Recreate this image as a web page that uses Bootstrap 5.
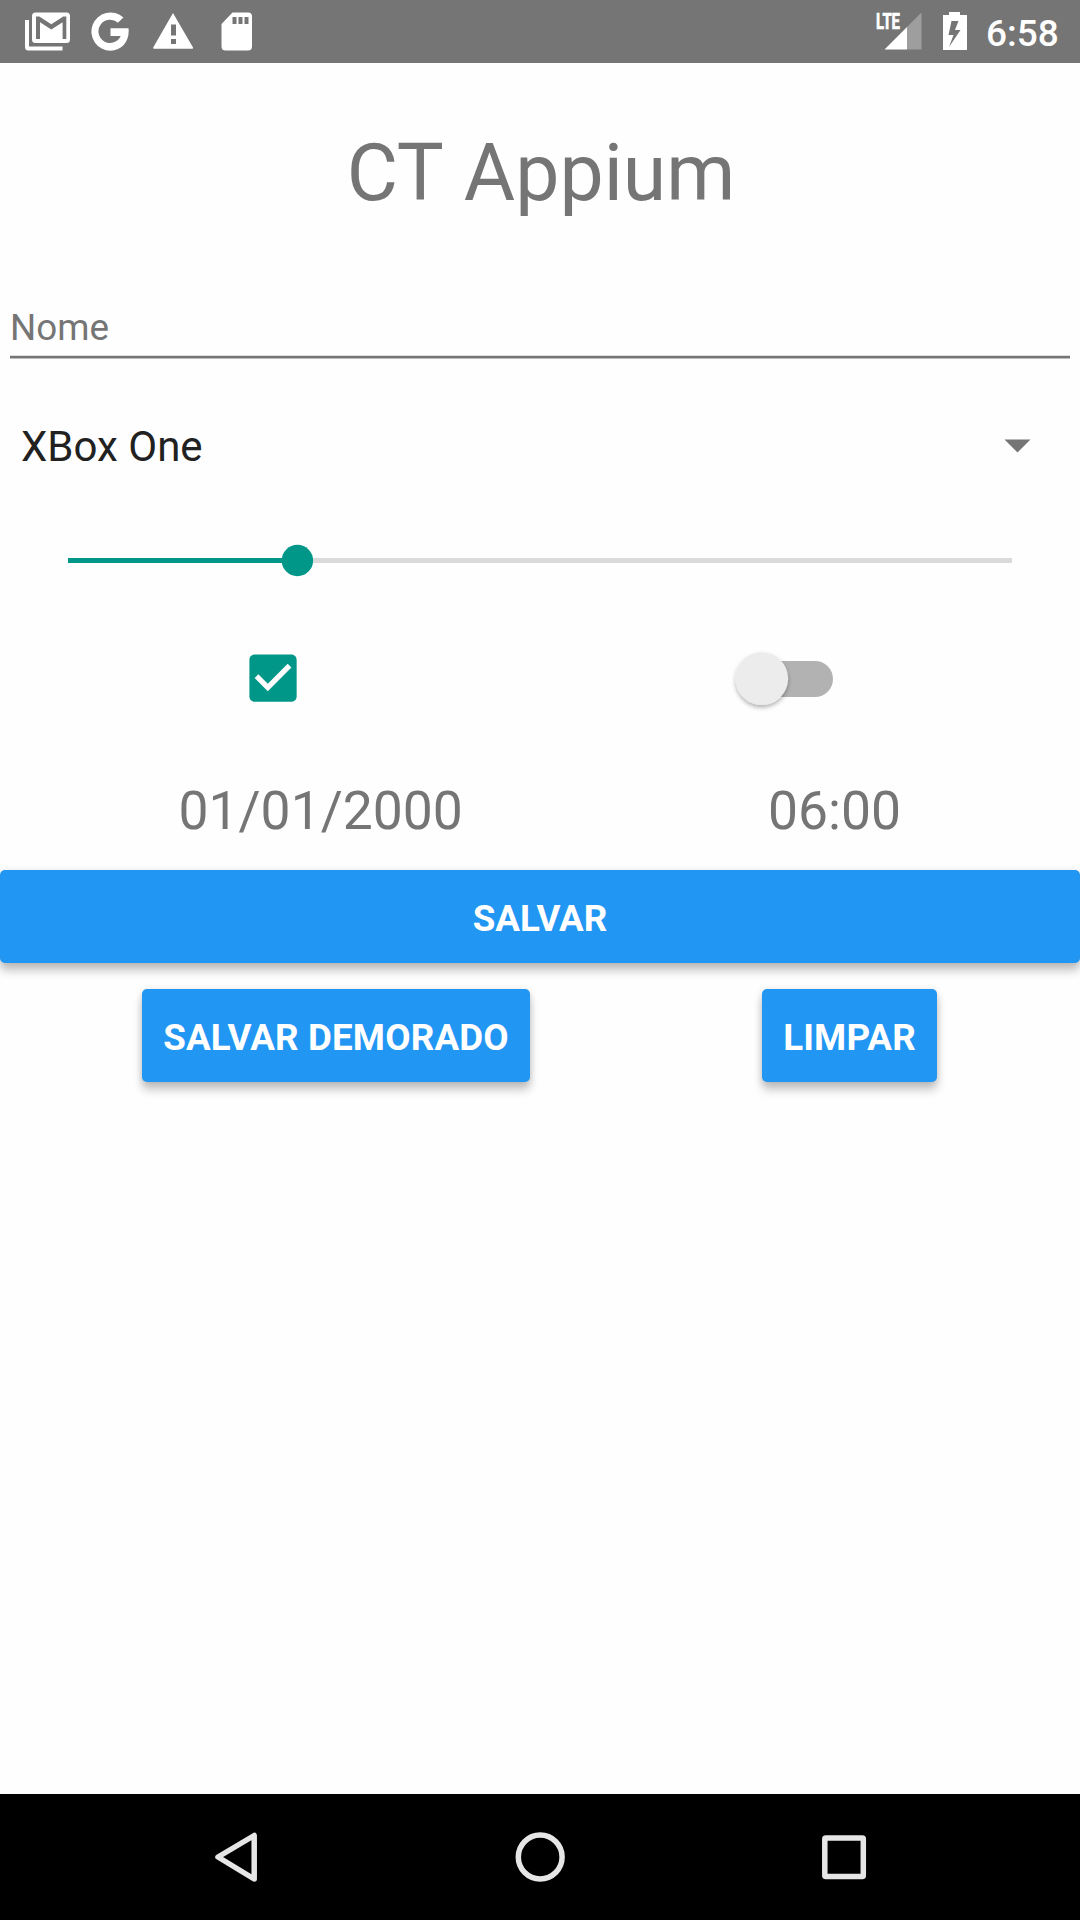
<!DOCTYPE html>
<html lang="pt-BR">
<head>
<meta charset="utf-8">
<meta name="viewport" content="width=device-width, initial-scale=1">
<title>CT Appium</title>
<link rel="stylesheet" href="https://cdn.jsdelivr.net/npm/bootstrap@5.3.0/dist/css/bootstrap.min.css">
<style>
  body { font-family: Roboto, sans-serif; background: #fefefe; color: #757575; }
  .screen { height: 1920px; width: 1080px; }
  .status-bar { height: 63px; background: #757575; color: #fff; }
  .status-bar svg { display: block; flex: none; }
  .clock { font-size: 37px; font-weight: 500; line-height: 63px; padding-top: 2px; width: 94px; }
  .title-text { font-size: 78.75px; font-weight: 400; line-height: 94px; padding: 63px 0 0 2px; word-spacing: 2px; }
  .name-wrap { padding: 77px 10px 0; }
  .name-field { font-size: 36.75px; line-height: 56px; height: 58px; color: #757575; background: none; border: 0; border-radius: 0; padding: 2px 0 0; }
  .name-field::placeholder { color: #757575; opacity: 1; }
  .name-line { height: 4px; background: linear-gradient(#dedede 1px, #757575 1px 3px, #bdbdbd 3px); }
  .console-row { height: 126px; margin-top: 24px; padding: 0 49px 0 21px; font-size: 42px; color: #212121; }
  .seek { height: 32px; margin: 36px 68px 0; }
  .seek svg, .toggles svg { display: block; overflow: visible; }
  .toggles { height: 64px; margin-top: 69px; padding: 0 241px; }
  .values { height: 64px; margin-top: 69px; padding-left: 178.5px; font-size: 53.45px; line-height: 64px; }
  .time-value { width: 312px; }
  .btn-app { --bs-btn-bg: #2196f3; --bs-btn-color: #fff; --bs-btn-hover-bg: #1e88e5; --bs-btn-hover-color: #fff;
    --bs-btn-border-width: 0; --bs-btn-border-radius: 5px; --bs-btn-font-size: 36.75px; --bs-btn-font-weight: 700;
    --bs-btn-line-height: 43px; --bs-btn-padding-y: 0; --bs-btn-padding-x: 0;
    height: 93px; padding-top: 4px; box-shadow: 0 8px 10px rgba(0,0,0,.22), 0 1px 7px rgba(0,0,0,.12); }
  .save-wrap { margin-top: 27px; }
  .actions { margin-top: 26px; padding: 0 143px 0 142px; }
  .actions .btn-app { letter-spacing: .15px; }
  .btn-slow { width: 388px; }
  .btn-clear { width: 175px; }
  .nav-keys { height: 126px; background: #000; }
</style>
</head>
<body>
<div class="screen d-flex flex-column overflow-hidden">
  <header class="status-bar d-flex justify-content-between">
    <svg width="270" height="63" viewBox="0 0 270 63" fill="#fff" aria-hidden="true">
      <path d="M25 20h4v26.500h33.500v4H28.500a3.500 3.500 0 0 1-3.500-3.500z"/>
      <path fill-rule="evenodd" d="M35.500 12.500h31a3.500 3.500 0 0 1 3.500 3.500v23.500a3.500 3.500 0 0 1-3.500 3.500h-31a3.500 3.500 0 0 1-3.500-3.500V16a3.500 3.500 0 0 1 3.500-3.500zM36 16.500V39h4V22.200l11.300 7.300 11.300-7.300V39h3.700V16.500h-3L51.300 24.300 39.300 16.500z"/>
      <path d="M110.500 28.300h18c1.500 12-6 22.400-17.900 22.400a19.100 19.100 0 1 1 12.800-33.200l-5.500 5.300a11.600 11.600 0 1 0 2.800 13.200h-10.200z"/>
      <path fill-rule="evenodd" d="M173 13l20 34.500q.5 1.300-1 1.300h-37.800q-1.500 0-1-1.300zM171 24.500v11h5v-11zm0 14.500v5h5v-5z"/>
      <path fill-rule="evenodd" d="M232.500 12.500H248a4 4 0 0 1 4 4v30a4 4 0 0 1-4 4h-22.500a4 4 0 0 1-4-4V24zm0 4.500v7h4v-7zm6 0v7h4v-7zm6 0v7h4v-7z"/>
    </svg>
    <div class="d-flex">
      <svg width="116" height="63" viewBox="870 0 116 63" fill="#fff" aria-hidden="true">
        <path fill-opacity=".3" d="M921.500 12.500v37H907V27z"/>
        <path d="M907 27v22.500h-22.500z"/>
        <text x="876" y="29" font-size="21.500" font-weight="700" stroke="#fff" stroke-width=".7" textLength="24" lengthAdjust="spacingAndGlyphs">LTE</text>
        <path fill-rule="evenodd" d="M949 12h11v3h7v35h-24V15h6zM951.500 21l-3 14h5l-4.500 12 11.500-17h-5.500l3.500-9z"/>
      </svg>
      <div class="clock">6:58</div>
    </div>
  </header>

  <main class="flex-grow-1">
    <h1 class="title-text text-center m-0">CT Appium</h1>

    <div class="name-wrap">
      <input class="name-field form-control" type="text" placeholder="Nome" aria-label="Nome">
      <div class="name-line"></div>
    </div>

    <div class="console-row d-flex align-items-center justify-content-between" role="combobox">
      <span>XBox One</span>
      <svg width="27" height="14" viewBox="0 0 27 14" fill="#757575"><path d="M.5.500h26L13.500 13.500z"/></svg>
    </div>

    <div class="seek">
      <svg width="944" height="32" viewBox="0 0 944 32">
        <path fill="#dadada" d="M229 13h715v5H229z"/>
        <path fill="#009688" d="M0 13h229v5H0z"/>
        <circle cx="229.400" cy="15.500" r="15.700" fill="#009688"/>
      </svg>
    </div>

    <div class="toggles d-flex justify-content-between">
      <svg width="63" height="63" viewBox="-.2 -.2 24 24" fill="#009688"><path d="M19 3H5c-1.110 0-2 .9-2 2v14c0 1.100.89 2 2 2h14c1.110 0 2-.9 2-2V5c0-1.100-.89-2-2-2zm-9 14l-5-5 1.410-1.410L10 14.170l7.590-7.590L19 8l-9 9z"/></svg>
      <svg width="106" height="64" viewBox="733 646 106 64">
        <defs><filter id="thumb" x="-30%" y="-30%" width="160%" height="160%"><feDropShadow dx="0" dy="2.500" stdDeviation="2" flood-opacity=".3"/></filter></defs>
        <rect x="743" y="661" width="90" height="36" rx="18" fill="#b2b2b2"/>
        <circle cx="761.800" cy="678.600" r="26.300" fill="#ececec" filter="url(#thumb)"/>
      </svg>
    </div>

    <div class="values d-flex">
      <div class="flex-grow-1">01/01/2000</div>
      <div class="time-value">06:00</div>
    </div>

    <div class="save-wrap"><button class="btn btn-app w-100" type="button">SALVAR</button></div>
    <div class="actions d-flex justify-content-between">
      <button class="btn btn-app btn-slow" type="button">SALVAR DEMORADO</button>
      <button class="btn btn-app btn-clear" type="button">LIMPAR</button>
    </div>
  </main>

  <footer class="nav-keys d-flex justify-content-center">
    <svg width="1080" height="126" viewBox="0 0 1080 126" fill="none" stroke="#e6e6e6" stroke-width="5.500" stroke-linejoin="round">
      <path d="M218 63L254.200 41.500v43.500z"/>
      <circle cx="540.200" cy="63" r="21.900"/>
      <rect x="824.800" y="44" width="38.500" height="38.500" rx="1"/>
    </svg>
  </footer>
</div>
<script src="https://cdn.jsdelivr.net/npm/bootstrap@5.3.0/dist/js/bootstrap.bundle.min.js"></script>
</body>
</html>
